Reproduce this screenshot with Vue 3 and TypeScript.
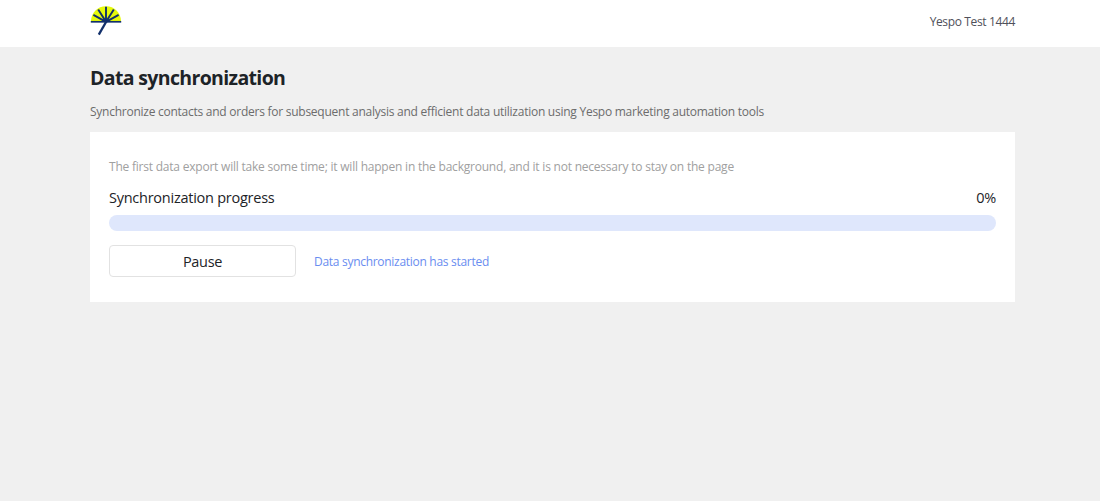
<script setup lang="ts">
import { ref } from 'vue'

const account = 'Yespo Test 1444'
const progress = ref(0)
</script>

<template>
  <div class="page">
    <header class="topbar">
      <div class="container topbar-inner">
        <svg class="logo" width="34" height="34" viewBox="0 0 34 34" aria-label="Yespo">
          <path d="M0.9 16.6C1.3 7.4 7.6 1.2 16 1.2S30.7 7.4 31.1 16.6Z" fill="#e6fa0a" />
          <g stroke="#12306b" fill="none">
            <path
              stroke-width="1.9"
              d="M16 16.8L3.4 9.9M16 16.8L8.2 4.4M16 16.8V1.8M16 16.8L23.8 4.4M16 16.8L28.6 9.9"
            />
            <path stroke-width="1.7" d="M0.8 16.8H31.2" />
            <path stroke-width="2.3" d="M16.6 16L8.8 29.6" />
          </g>
        </svg>
        <span class="account">{{ account }}</span>
      </div>
    </header>

    <main class="container">
      <h1 class="title">Data synchronization</h1>
      <p class="subtitle">
        Synchronize contacts and orders for subsequent analysis and efficient data utilization using Yespo marketing automation tools
      </p>
      <section class="card">
        <p class="hint">
          The first data export will take some time; it will happen in the background, and it is not necessary to stay on the page
        </p>
        <div class="progress-head">
          <span class="label">Synchronization progress</span>
          <span class="percent">{{ progress }}%</span>
        </div>
        <div class="track"><div class="fill" :style="{ width: progress + '%' }"></div></div>
        <div class="actions">
          <button class="pause" type="button">Pause</button>
          <span class="status">Data synchronization has started</span>
        </div>
      </section>
    </main>
  </div>
</template>

<style>
body {
  background: #f0f0f0;
}
</style>

<style scoped>
.page {
  min-height: 501px;
  background: #f0f0f0;
  color: #1d2327;
  font-family: "Segoe UI", "Open Sans", "Noto Sans", sans-serif;
}
.container {
  width: 925px;
  margin-left: 90px;
}
.topbar {
  height: 47px;
  background: #fff;
}
.topbar-inner {
  display: flex;
  justify-content: space-between;
  align-items: flex-start;
}
.logo {
  display: block;
  margin-top: 5px;
}
.account {
  margin-top: 12px;
  font-size: 12px;
  line-height: 20px;
  letter-spacing: -0.36px;
  color: #50505a;
}
.title {
  margin: 0;
  padding-top: 17px;
  font-size: 19.5px;
  line-height: 28px;
  font-weight: 700;
  letter-spacing: -0.65px;
}
.subtitle {
  margin: 10px 0 0;
  font-size: 12px;
  line-height: 20px;
  letter-spacing: -0.254px;
  color: #6c6c6c;
  white-space: nowrap;
}
.card {
  box-sizing: border-box;
  height: 170px;
  margin-top: 10px;
  padding: 25px 19px 0;
  background: #fff;
}
.hint {
  margin: 0;
  font-size: 12px;
  line-height: 20px;
  letter-spacing: -0.217px;
  color: #a0a0a0;
  white-space: nowrap;
}
.progress-head {
  display: flex;
  justify-content: space-between;
  margin-top: 9px;
  font-size: 14.5px;
  line-height: 24px;
  letter-spacing: -0.25px;
}
.track {
  height: 16px;
  margin-top: 5px;
  border-radius: 8px;
  background: #dfe7fc;
  overflow: hidden;
}
.fill {
  height: 100%;
  background: #6a8df0;
}
.actions {
  display: flex;
  align-items: center;
  gap: 18px;
  margin-top: 14px;
}
.pause {
  box-sizing: border-box;
  width: 187px;
  height: 32px;
  padding: 2px 0 0;
  border: 1px solid #e2e2e2;
  border-radius: 4px;
  background: #fff;
  color: #1d2327;
  font-family: inherit;
  font-size: 14.5px;
  line-height: 28px;
  letter-spacing: -0.3px;
}
.status {
  padding-top: 2px;
  font-size: 12px;
  line-height: 20px;
  letter-spacing: -0.29px;
  color: #6a8df0;
}
</style>
